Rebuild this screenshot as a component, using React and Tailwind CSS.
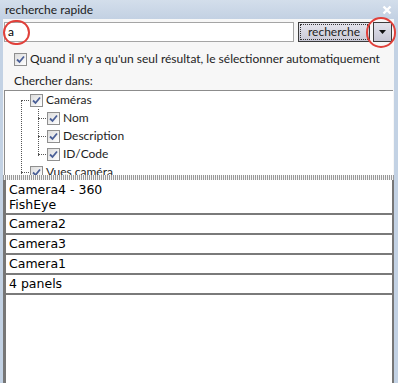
import React from 'react';

const Check = () => (
  <span className="w-[13px] h-[13px] shrink-0 border border-[#8f8f8f] bg-gradient-to-br from-[#dcdcdc] to-[#ffffff] flex items-center justify-center">
    <svg width="9" height="9" viewBox="0 0 9 9">
      <path d="M1 4.5 L3.5 7 L8 1.5" fill="none" stroke="#4a5f97" strokeWidth="1.8" />
    </svg>
  </span>
);

const TreeRow = ({ label, indent }) => (
  <div className="flex items-center h-[18px]" style={{ paddingLeft: indent }}>
    <span className="w-[8px] border-t border-dotted border-[#555] mr-[1px]" />
    <Check />
    <span className="ml-[3px] text-[12px] text-[#1e1e1e]">{label}</span>
  </div>
);

const rows = ['Camera2', 'Camera3', 'Camera1', '4 panels'];

export default function App() {
  return (
    <div className="w-[398px] h-[383px] bg-[#c3d2e4] flex flex-col overflow-hidden relative" style={{ fontFamily: 'Lato, "Open Sans", sans-serif' }}>
      {/* title bar */}
      <div className="h-[19px] flex items-center justify-between px-[5px] bg-gradient-to-b from-[#d3deeb] to-[#c3d1e3]">
        <span className="text-[12px] text-[#1b1b1b] leading-none">recherche rapide</span>
        <svg width="10" height="10" viewBox="0 0 10 10" className="mr-[1px] mt-[1px]">
          <path d="M1.5 1.5 L8.5 8.5 M8.5 1.5 L1.5 8.5" stroke="#ffffff" strokeWidth="2.4" />
        </svg>
      </div>

      {/* body */}
      <div className="flex-1 ml-[3px] mr-[4px] bg-[#f7f7f7] flex flex-col">
        {/* search row */}
        <div className="flex items-center h-[20px] mt-[3px] pl-[1px]">
          <div className="w-[290px] h-[20px] bg-white border border-[#a5a5a5] flex items-center px-[3px]">
            <span className="text-[12px] text-black">a</span>
          </div>
          <div className="ml-[4px] w-[72px] h-[20px] border border-[#3c3c3c] bg-gradient-to-b from-[#e6e6ee] to-[#c9c9d6] p-[1px]">
            <div className="w-full h-full border border-dotted border-[#333] flex items-center justify-center text-[12px] text-[#222]">
              recherche
            </div>
          </div>
          <div className="ml-[3px] w-[19px] h-[20px] border border-[#3c3c3c] bg-gradient-to-b from-[#e3e3ec] to-[#c6c6d4] flex items-center justify-center">
            <svg width="7" height="4" viewBox="0 0 7 4"><path d="M0 0 H7 L3.5 4 Z" fill="#111" /></svg>
          </div>
        </div>

        {/* auto select */}
        <div className="flex items-center mt-[10px] pl-[11px] h-[14px]">
          <Check />
          <span className="ml-[3px] text-[12px] text-[#1e1e1e]">
            Quand il n'y a qu'un seul résultat, le sélectionner automatiquement
          </span>
        </div>

        <div className="mt-[6px] pl-[11px] text-[12px] text-[#1e1e1e] h-[18px] leading-[18px]">Chercher dans:</div>

        {/* tree */}
        <div className="ml-[1px] mr-[1px] h-[85px] bg-white border-t border-l border-[#8c8c8c] overflow-hidden relative">
          <div className="absolute left-[16px] top-[9px] h-[74px] border-l border-dotted border-[#555]" />
          <div className="absolute left-[33px] top-[18px] h-[47px] border-l border-dotted border-[#555]" />
          <TreeRow label="Caméras" indent={16} />
          <TreeRow label="Nom" indent={33} />
          <TreeRow label="Description" indent={33} />
          <TreeRow label="ID/Code" indent={33} />
          <TreeRow label="Vues caméra" indent={16} />
        </div>

        {/* splitter */}
        <div className="h-[5px] bg-[repeating-linear-gradient(90deg,#9a9a9a_0px,#9a9a9a_1px,#f5f5f5_1px,#f5f5f5_2px)]" />

        {/* results */}
        <div className="flex-1 bg-white border-l-[3px] border-r-[2px] border-[#777] flex flex-col" style={{ fontFamily: '"DejaVu Sans", "Liberation Sans", sans-serif' }}>
          <div className="h-[35px] border-b-2 border-[#7a7a7a] px-[3px] pt-[2px] text-[12.5px] leading-[15px] text-black">
            <div>Camera4 - 360</div>
            <div>FishEye</div>
          </div>
          {rows.map((r) => (
            <div key={r} className="h-[20px] border-b-2 border-[#7a7a7a] px-[3px] flex items-center text-[12.5px] text-black">
              {r}
            </div>
          ))}
        </div>
      </div>

      {/* red highlight circles */}
      <div className="absolute left-[3px] top-[20px] w-[27px] h-[25px] rounded-full border-2 border-[#e0403a]" />
      <div className="absolute left-[366px] top-[17px] w-[30px] h-[31px] rounded-full border-2 border-[#e0403a]" />
    </div>
  );
}
